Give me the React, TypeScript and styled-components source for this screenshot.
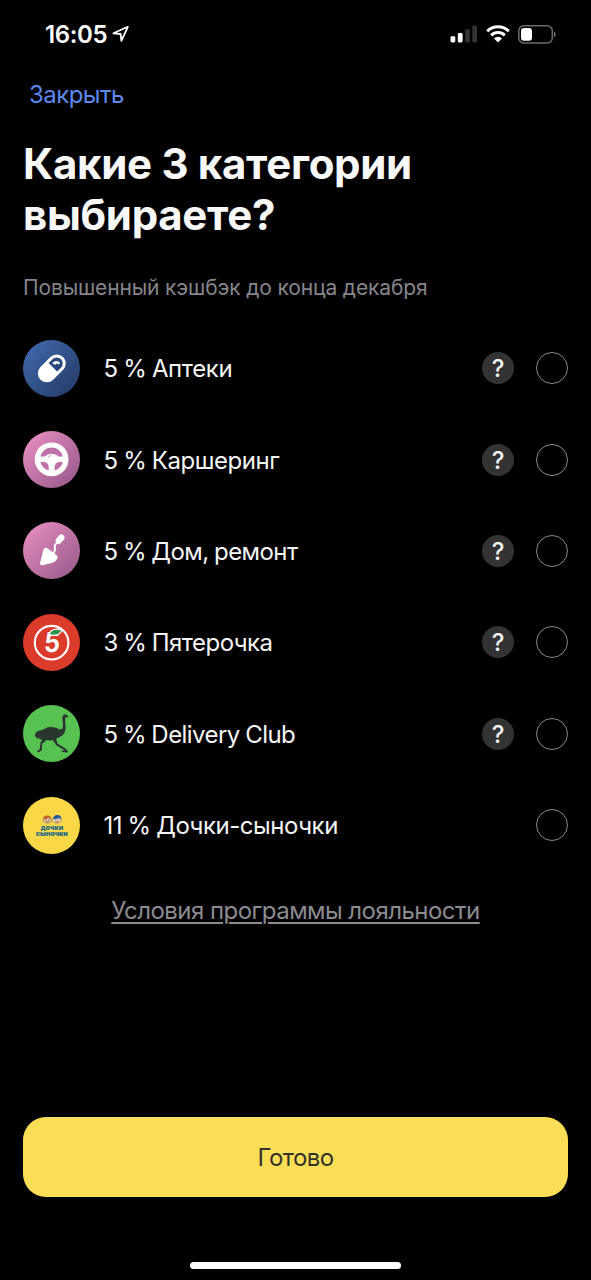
import React from "react";
import styled, { createGlobalStyle } from "styled-components";

const GlobalStyle = createGlobalStyle`
  * { box-sizing: border-box; }
  body { margin: 0; background: #000; }
  button { font: inherit; border: 0; padding: 0; background: none; }
`;

const Screen = styled.main`
  display: flex;
  flex-direction: column;
  width: 591px;
  height: 1280px;
  overflow: hidden;
  background: #000;
  color: #f5f5f6;
  font-family: Inter, "Liberation Sans", sans-serif;
`;

const StatusBar = styled.header`
  display: flex;
  align-items: center;
  justify-content: space-between;
  height: 68px;
  padding: 0 35px 0 45px;
`;

const Clock = styled.div`
  display: flex;
  align-items: center;
  gap: 5px;
  color: #fff;
  font-size: 24px;
  font-weight: 600;
  letter-spacing: -0.4px;
`;

const StatusIcons = styled.div`
  display: flex;
  align-items: center;
  gap: 8px;
`;

const NavBar = styled.nav`
  display: flex;
  align-items: center;
  height: 54px;
  padding-left: 29px;
`;

const CloseButton = styled.button`
  color: #5e88ee;
  font-size: 24px;
  line-height: 30px;
  letter-spacing: -0.55px;
`;

const Heading = styled.h1`
  margin: 16px 23px 0;
  color: #f8f8f8;
  font-size: 42px;
  font-weight: 700;
  line-height: 51px;
  letter-spacing: -0.3px;
`;

const Subtitle = styled.p`
  margin: 34px 23px 0;
  color: #85858a;
  font-size: 21px;
  line-height: 28px;
  letter-spacing: -0.14px;
`;

const CategoryList = styled.ul`
  display: flex;
  flex-direction: column;
  margin: 20.5px 0 0;
  padding: 0 23px;
  list-style: none;
`;

const CategoryRow = styled.li`
  display: flex;
  align-items: center;
  height: 91.4px;
`;

const Badge = styled.span<{ $fill: string }>`
  display: flex;
  flex: none;
  width: 57px;
  height: 57px;
  border-radius: 50%;
  background: ${(p) => p.$fill};
  overflow: hidden;
`;

const CategoryName = styled.span<{ $spacing: number }>`
  flex: 1;
  margin-left: 23.5px;
  padding-top: 2px;
  font-size: 24px;
  line-height: 30px;
  letter-spacing: ${(p) => p.$spacing}px;
  word-spacing: -0.8px;
`;

const HelpButton = styled.button`
  display: flex;
  align-items: center;
  justify-content: center;
  width: 32px;
  height: 32px;
  margin-right: 22px;
  padding-top: 2px;
  border-radius: 50%;
  background: #333334;
  color: #f5f5f5;
  font-size: 24px;
  font-weight: 500;
  line-height: 30px;
`;

const Radio = styled.span`
  width: 32px;
  height: 32px;
  border: 1.3px solid #88888a;
  border-radius: 50%;
`;

const TermsLink = styled.a`
  align-self: center;
  margin-top: 25px;
  color: #8b8b90;
  font-size: 24px;
  line-height: 30px;
  letter-spacing: -0.54px;
  text-decoration: underline;
  text-decoration-thickness: 1.5px;
  text-underline-offset: 3px;
`;

const Footer = styled.footer`
  display: flex;
  flex-direction: column;
  align-items: center;
  margin-top: auto;
  padding: 0 23px 11px;
`;

const DoneButton = styled.button`
  width: 100%;
  height: 80px;
  margin-bottom: 65px;
  border-radius: 23px;
  background: #fadf56;
  color: #35312b;
  font-size: 24px;
  letter-spacing: -0.6px;
`;

const HomeIndicator = styled.div`
  width: 211px;
  height: 7px;
  border-radius: 4px;
  background: #fff;
`;

const LocationArrow = () => (
  <svg width="18" height="18" viewBox="0 0 18 18" fill="none" stroke="#fff" strokeWidth="1.8" strokeLinejoin="round">
    <path d="M15.8 1.8 1.4 8.3l7.2.7.8 6.9z" />
  </svg>
);

const Signal = () => (
  <svg width="28" height="18" viewBox="0 0 28 18">
    <rect x="0.5" y="11.3" width="4.8" height="6.2" rx="1.4" fill="#fff" />
    <rect x="7.8" y="8" width="4.8" height="9.5" rx="1.4" fill="#fff" />
    <rect x="15.1" y="4.2" width="4.8" height="13.3" rx="1.4" fill="#333" />
    <rect x="22.3" y="0.8" width="4.8" height="16.7" rx="1.4" fill="#333" />
  </svg>
);

const Wifi = () => (
  <svg width="24" height="18" viewBox="0 0 24 18" fill="none" stroke="#fff" strokeWidth="3">
    <path d="M1.2 6.2a15.4 15.4 0 0 1 21.6 0" />
    <path d="M5.2 10.4a9.7 9.7 0 0 1 13.6 0" />
    <path d="M12 17.6 8 13.4a5.8 5.8 0 0 1 8 0z" fill="#fff" stroke="none" />
  </svg>
);

const Battery = () => (
  <svg width="38" height="19" viewBox="0 0 38 19">
    <rect x="0.8" y="0.8" width="33.5" height="17.2" rx="5" fill="none" stroke="#6b6b6b" strokeWidth="1.5" />
    <rect x="3" y="3" width="11" height="12.8" rx="3" fill="#fff" />
    <path d="M36 6.5c2 .8 2 5 0 5.8z" fill="#77777a" />
  </svg>
);

const Glyph = styled.svg.attrs({ viewBox: "0 0 57 57" })`
  width: 57px;
  height: 57px;
`;

const Pill = () => (
  <Glyph>
    <g transform="translate(28.8 28.4) rotate(-45)">
      <rect x="-16" y="-9" width="32" height="18" rx="9" fill="#fff" />
      <path d="M1.5 -6H7A6 6 0 0 1 7 6H1.5z" fill="#29477f" />
    </g>
    <path d="M29.3 22.9q4-3.8 8 0l-1.7 1.7-1.7-1-1.6 1.1-1.6-.5z" fill="#fff" />
  </Glyph>
);

const Wheel = () => (
  <Glyph>
    <circle cx="28.6" cy="28.3" r="16.9" fill="#fff" />
    <g fill="#bf72a9">
      <path d="M17.4 25.5a11.5 11.5 0 0 1 22.4 0h-4.2q-2.5-2.7-7-2.7t-7 2.7z" />
      <path d="M17.4 31h3.9q3.9.7 4.4 5v3.4a11.6 11.6 0 0 1-8.3-8.4z" />
      <path d="M39.8 31h-3.9q-3.9.7-4.4 5v3.4a11.6 11.6 0 0 0 8.3-8.4z" />
    </g>
    <path d="M24.8 26.3q1-1.8 3.4-1.6" fill="none" stroke="#cf94bf" strokeWidth="1" />
  </Glyph>
);

const Trowel = () => (
  <Glyph>
    <path
      d="M20.6 27.3q1.4-2.4 3.8-1l9.6 7.3q1.3 1.2.3 3.2-1.4 3-4.6 4l-10.2 2.4q-2.8.3-2.4-2.4z"
      fill="#fff"
    />
    <path d="M29.4 32.3 31.8 29v-5.4q.4-2 3.2-3" fill="none" stroke="#fff" strokeWidth="2" strokeLinejoin="round" />
    <path d="m35.9 18.5 2.4-2.8" stroke="#fff" strokeWidth="6.4" strokeLinecap="round" />
  </Glyph>
);

const Five = () => (
  <Glyph>
    <circle cx="28.6" cy="28.7" r="16.8" fill="none" stroke="#fff" strokeWidth="2.1" />
    <text
      x="0"
      y="0"
      transform="translate(20.4 38.2) skewX(-4)"
      fill="#fff"
      fontFamily="Inter, sans-serif"
      fontSize="27"
      fontWeight="700"
      textLength="16"
      lengthAdjust="spacingAndGlyphs"
    >
      5
    </text>
    <path d="M26 20.2c2-5 7.4-6 13-4.2-2.2 5-7.4 6.2-13 4.2z" fill="#238b45" stroke="#fff" strokeWidth="1.2" />
    <path d="m28.6 19 6.4-2" stroke="#48ab68" strokeWidth=".7" />
  </Glyph>
);

const Ostrich = () => (
  <Glyph fill="none" stroke="#29362e" strokeLinecap="round" strokeLinejoin="round">
    <path
      d="M12 30.6q.2-3.6 3.4-4.6 3-.4 5.4-1.6 4-2.7 8.6-2.2 4.4.6 7.2 2.2 2.6.4 3.3-2 .6-2.6-.2-6.6-.8-3.6.5-5.4 1.4-1.6 3-.6l2 1.5-.4.8-2.3.3q-.9.8-.5 3.4 1 5.4.2 9.6-1.2 4.6-5 6.2-3.4 1.4-5 3.4l-5.4.3-6.4-.4q-2 .2-3.6-1.2l-1.6-1-.6 1-1-1z"
      fill="#29362e"
      strokeWidth=".3"
    />
    <path d="M22.4 33.2 18.4 38l-.7 7" strokeWidth="2" />
    <path d="m22 33.6-1.6 2.6" strokeWidth="3" />
    <path d="m17.7 44.6-2.6 1.8" strokeWidth="1.8" />
    <path d="m31.6 33.6 2.2 5.8 8.6 5.2" strokeWidth="2" />
    <path d="m31.2 33.8 1.2 2.8" strokeWidth="3" />
    <path d="m39.4 46.2 4.8.6-2-2.4" strokeWidth="1.6" />
  </Glyph>
);

const Kids = () => (
  <Glyph>
    <g stroke="#59645e" strokeWidth=".5">
      <ellipse cx="24.3" cy="22.9" rx="4.1" ry="3" fill="#f0c9a0" />
      <ellipse cx="34.1" cy="22.9" rx="4.1" ry="3" fill="#f4dab8" />
    </g>
    <path d="M20 22.6q.3-4.3 4.3-4.1 3.8.1 4.2 4.1l-2.7-1.5-2.5 1z" fill="#c0672e" />
    <path d="M30 22q.7-4 4.5-3.9 3.6.2 4 3.9l-2.4-1.1-3 1z" fill="#23599b" />
    <path d="M22.5 23h1m2 0h1m5.8 0h1m2 0h1" stroke="#263e54" strokeWidth="1.2" />
    <path d="M23 24.7q1.4 1 2.7 0m7 0q1.4 1 2.7 0" stroke="#b43936" strokeWidth=".8" fill="none" />
    <g fill="#1f6c86" fontFamily="Inter, sans-serif" fontWeight="900" fontSize="6.4">
      <text x="17.7" y="32.8" textLength="22.5" lengthAdjust="spacingAndGlyphs">дочки</text>
      <text x="12.8" y="39.4" textLength="32" lengthAdjust="spacingAndGlyphs">сыночки</text>
    </g>
  </Glyph>
);

const PINK = "linear-gradient(135deg, #df87bb 15%, #965a89 95%)";

const categories = [
  { name: "5 % Аптеки", fill: "linear-gradient(135deg, #3c64a6 15%, #263d69 90%)", icon: <Pill />, help: true, spacing: -0.4 },
  { name: "5 % Каршеринг", fill: PINK, icon: <Wheel />, help: true, spacing: -0.45 },
  { name: "5 % Дом, ремонт", fill: PINK, icon: <Trowel />, help: true, spacing: -0.55 },
  { name: "3 % Пятерочка", fill: "#da3b2b", icon: <Five />, help: true, spacing: -0.53 },
  { name: "5 % Delivery Club", fill: "#57c252", icon: <Ostrich />, help: true, spacing: -0.55 },
  { name: "11 % Дочки-сыночки", fill: "#f9d747", icon: <Kids />, help: false, spacing: -0.46 },
];

export default function App() {
  return (
    <Screen>
      <GlobalStyle />
      <StatusBar>
        <Clock>
          16:05
          <LocationArrow />
        </Clock>
        <StatusIcons>
          <Signal />
          <Wifi />
          <Battery />
        </StatusIcons>
      </StatusBar>
      <NavBar>
        <CloseButton>Закрыть</CloseButton>
      </NavBar>
      <Heading>
        Какие 3 категории
        <br />
        выбираете?
      </Heading>
      <Subtitle>Повышенный кэшбэк до конца декабря</Subtitle>
      <CategoryList>
        {categories.map((c) => (
          <CategoryRow key={c.name}>
            <Badge $fill={c.fill}>{c.icon}</Badge>
            <CategoryName $spacing={c.spacing}>{c.name}</CategoryName>
            {c.help && <HelpButton>?</HelpButton>}
            <Radio />
          </CategoryRow>
        ))}
      </CategoryList>
      <TermsLink>Условия программы лояльности</TermsLink>
      <Footer>
        <DoneButton>Готово</DoneButton>
        <HomeIndicator />
      </Footer>
    </Screen>
  );
}
